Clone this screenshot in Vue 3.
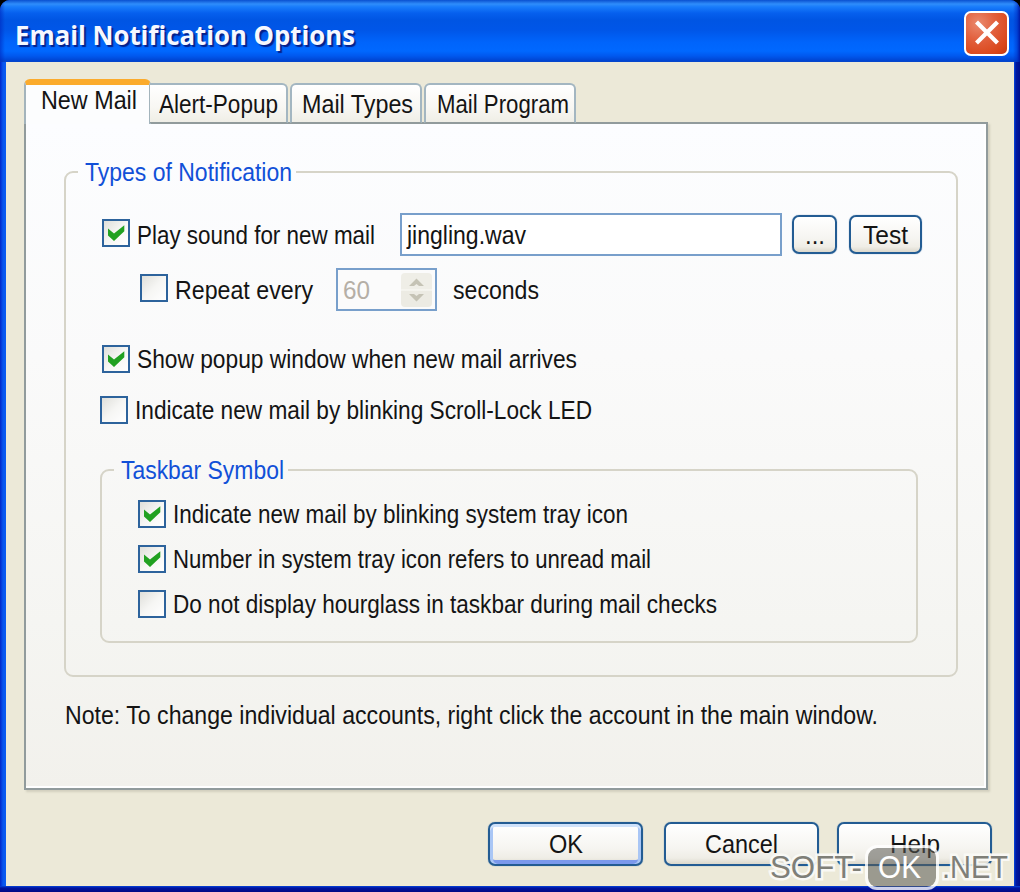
<script setup>
import { ref } from 'vue'

// Condenses a line of text horizontally so that it takes up the given width.
const vFit = {
  mounted(el, { value }) {
    const natural = el.getBoundingClientRect().width
    if (!natural) return
    el.style.transform = `scaleX(${value / natural})`
    el.style.marginRight = `${value - natural}px`
  },
}

const tick = 'M6 9.500L12 14.500L22.300 6.300V12.300L12 22L6 16.500Z'

const tabs = [
  { name: 'New Mail', fit: 96, cls: 'tab-new' },
  { name: 'Alert-Popup', fit: 119, cls: 'tab-alert' },
  { name: 'Mail Types', fit: 111, cls: 'tab-types' },
  { name: 'Mail Program', fit: 132, cls: 'tab-program' },
]
const active = ref('New Mail')

const taskbar = ref([
  { text: 'Indicate new mail by blinking system tray icon', fit: 455, on: true },
  { text: 'Number in system tray icon refers to unread mail', fit: 478, on: true },
  { text: 'Do not display hourglass in taskbar during mail checks', fit: 544, on: false },
])
</script>

<template>
  <div class="window">
    <header class="titlebar">
      <h1 v-fit="340" class="title">Email Notification Options</h1>
      <button class="close" aria-label="Close">
        <svg viewBox="0 0 44 44" width="44" height="44">
          <path d="M13 12.500L31 30.500M31 12.500L13 30.500" stroke="#fff" stroke-width="4.200" stroke-linecap="square" />
        </svg>
      </button>
    </header>

    <main class="body">
      <nav class="tabs">
        <div v-for="t in tabs" :key="t.name" class="tab" :class="[t.cls, { active: t.name === active }]" @click="active = t.name">
          <span v-fit="t.fit" class="t">{{ t.name }}</span>
        </div>
      </nav>

      <section class="panel">
        <fieldset class="group outer">
          <legend><span v-fit="207" class="t">Types of Notification</span></legend>
          <div class="row play">
            <span class="check"><svg viewBox="0 0 28 28"><path :d="tick" /></svg></span>
            <span v-fit="238" class="t">Play sound for new mail</span>
            <div class="input"><span v-fit="119" class="t">jingling.wav</span></div>
            <button class="btn browse"><span v-fit="20" class="t">...</span></button>
            <button class="btn test"><span v-fit="45" class="t">Test</span></button>
          </div>
          <div class="row repeat">
            <span class="check" />
            <span v-fit="138" class="t">Repeat every</span>
            <div class="spin">
              <span v-fit="27" class="t">60</span>
              <div class="arrows">
                <svg viewBox="0 0 31 34" width="31" height="34">
                  <path d="M8 13L15.500 5.500L23 13H18L15.500 11L13 13Z M8 21H13L15.500 23L18 21H23L15.500 28.500Z" fill="#c5c3b5" />
                </svg>
              </div>
            </div>
            <span v-fit="86" class="t">seconds</span>
          </div>
          <div class="row show">
            <span class="check"><svg viewBox="0 0 28 28"><path :d="tick" /></svg></span>
            <span v-fit="440" class="t">Show popup window when new mail arrives</span>
          </div>
          <div class="row led">
            <span class="check" />
            <span v-fit="457" class="t">Indicate new mail by blinking Scroll-Lock LED</span>
          </div>

          <fieldset class="group inner">
            <legend><span v-fit="163" class="t">Taskbar Symbol</span></legend>
            <div v-for="o in taskbar" :key="o.text" class="row tray" @click="o.on = !o.on">
              <span class="check"><svg v-if="o.on" viewBox="0 0 28 28"><path :d="tick" /></svg></span>
              <span v-fit="o.fit" class="t">{{ o.text }}</span>
            </div>
          </fieldset>
        </fieldset>
        <p class="note"><span v-fit="813" class="t">Note: To change individual accounts, right click the account in the main window.</span></p>
      </section>

      <footer class="actions">
        <button class="btn wide default"><span v-fit="34" class="t">OK</span></button>
        <button class="btn wide cancel"><span v-fit="73" class="t">Cancel</span></button>
        <button class="btn wide help"><span v-fit="50" class="t">Help</span></button>
      </footer>
    </main>

    <div class="watermark">
      <span v-fit="93" class="wm">SOFT-</span>
      <span class="wm-box"><span v-fit="43" class="wm-ok">OK</span></span>
      <span v-fit="67" class="wm">.NET</span>
    </div>
  </div>
</template>

<style scoped>
* { box-sizing: border-box; }
.window {
  position: relative;
  width: 1020px;
  height: 892px;
  padding: 0 6px 6px 6px;
  overflow: hidden;
  font-family: "Liberation Sans", Arial, sans-serif;
  font-size: 25px;
  color: #141414;
  border-radius: 10px 10px 0 0;
  background:
    linear-gradient(0deg, #000b84 0, #0013a0 4px, #0546dc 6px, transparent 6px),
    linear-gradient(90deg, #0126c8 0, #0855ee 3px, #0b5cf2 6px, transparent 6px),
    linear-gradient(270deg, #000f8a 0, #0019a4 4px, #0648dc 6px, transparent 7px) #0648dc;
}
.titlebar {
  display: flex;
  align-items: center;
  justify-content: space-between;
  height: 62px;
  margin: 0 -6px;
  padding: 4px 11px 0 15px;
  background:
    linear-gradient(270deg, #0019a4 0, rgba(0, 40, 190, 0.5) 3px, transparent 7px),
    linear-gradient(90deg, rgba(0, 40, 190, 0.6) 0, transparent 5px),
    linear-gradient(#0a50d0 0, #2f8dfb 4px, #187bfb 7px, #0660ee 13px, #0055e3 20px, #0056e8 30px, #0064fb 42px, #0068ff 51px, #0058ee 56px, #0043cf 61px, #0a48c8 62px);
}
.title {
  margin: 0;
  padding-top: 3px;
  font: bold 27px/34px "Open Sans", "Noto Sans", sans-serif;
  color: #f6f8ff;
  text-shadow: 2px 2px 1px #05208a;
  white-space: nowrap;
  transform-origin: 0 50%;
}
.close {
  width: 45px;
  height: 45px;
  padding: 0;
  border: 2px solid #fff;
  border-radius: 7px;
  background: radial-gradient(circle at 30% 25%, #ea8a6e 0, #e2603d 40%, #d9461a 80%, #c23a12 100%);
}
.close svg { display: block; margin: -1.5px; }
.t {
  display: inline-block;
  flex: none;
  line-height: 30px;
  white-space: nowrap;
  transform-origin: 0 50%;
}
.body {
  height: 824px;
  padding: 17px 25px 0 18px;
  background: #ece9d8;
  border-right: 1px solid #f4ead0;
  border-bottom: 1px solid #f4ead0;
}
.tabs {
  position: relative;
  z-index: 1;
  display: flex;
  align-items: flex-end;
  height: 44px;
}
.tab {
  height: 40px;
  padding-top: 4px;
  border: 2px solid #a3b6c1;
  border-bottom: 1px solid #919b9c;
  border-radius: 6px 6px 0 0;
  background: linear-gradient(#fff, #f8f7f3 60%, #efeee6);
}
.tab.active {
  height: 45px;
  margin-bottom: -1px;
  padding-top: 0;
  border-top: 6px solid #fbb02c;
  border-bottom: 0;
  border-color: #fbab2c #a3b4bc;
  background: #fcfdfe;
}
.tab-new { width: 127px; padding-left: 15px; }
.tab-alert { width: 138px; margin-left: -1px; padding-left: 9px; border-left: 0; border-top-left-radius: 0; }
.tab-types { width: 132px; margin-left: 2px; padding-left: 10px; }
.tab-program { width: 152px; margin-left: 2px; padding-left: 11px; }
.panel {
  height: 668px;
  margin-top: -1px;
  padding: 33px 28px 0 38px;
  border: 2px solid #919b9c;
  box-shadow: inset -2px -2px 0 #fff, 2px 2px 2px #d2cfbe;
  background: linear-gradient(#fcfdff, #fafafa 35%, #f5f5f2 75%, #f2f1ec);
}
.group {
  min-width: 0;
  margin: 0;
  border: 2px solid #d6d4c8;
  border-radius: 9px;
  padding: 0 0 0 12px;
}
.group legend {
  height: 30px;
  padding: 0 4px 0 7px;
  color: #1150d8;
}
.outer { width: 894px; height: 520px; }
.inner { width: 818px; height: 188px; margin: 31px 0 0 22px; }
.row { display: flex; align-items: center; height: 28px; }
.check {
  flex: none;
  width: 28px;
  height: 28px;
  margin-right: 7px;
  border: 2px solid #2d639c;
  background: linear-gradient(135deg, #dfdfda, #f6f6f4 50%, #fff);
}
.check svg { display: block; width: 28px; height: 28px; margin: -2px; }
.check path { fill: #21a121; }
.play { height: 43px; margin: 26px 0 0 24px; }
.play > .check, .repeat > .check { margin-bottom: 3px; }
.input {
  display: flex;
  align-items: center;
  width: 382px;
  height: 43px;
  margin-left: 25px;
  padding-left: 5px;
  border: 2px solid #789fcb;
  background: #fff;
}
.btn {
  display: flex;
  align-items: center;
  justify-content: center;
  flex: none;
  height: 39px;
  padding: 0;
  border: 2px solid #235c93;
  border-radius: 7px;
  font: inherit;
  color: inherit;
  background: linear-gradient(#fff, #f6f5f1 60%, #efede6 85%, #dcd8cc);
  box-shadow: 0 0 1px #4f7da8;
}
.browse { width: 45px; margin-left: 10px; }
.test { width: 73px; margin-left: 12px; }
.repeat { height: 43px; margin: 12px 0 0 62px; }
.spin {
  display: flex;
  align-items: center;
  justify-content: space-between;
  width: 101px;
  height: 43px;
  margin: 0 16px 0 23px;
  padding: 0 3px 0 5px;
  border: 2px solid #789fcb;
  background: #fbfbfb;
  color: #b5afa6;
}
.arrows { height: 34px; border-radius: 4px; background: linear-gradient(#efeee7 46%, #f8f8f3 50%, #ecebe3 54%); }
.arrows svg { display: block; }
.show { margin: 34px 0 0 24px; }
.led { margin: 23px 0 0 22px; }
.tray { margin: 17px 0 0 24px; }
legend + .tray { margin-top: 15px; }
.note { margin: 23px 0 0; padding-left: 1px; height: 30px; line-height: 30px; }
.actions { display: flex; height: 45px; margin-top: 32px; padding-left: 464px; }
.wide { height: 44px; width: 155px; }
.default { box-shadow: inset 0 3px 0 #cfe2fb, inset 3px 0 0 #a9c6f5, inset -3px 0 0 #a9c6f5, inset 0 -4px 0 #7b99ec, 0 0 1px #4f7da8; }
.cancel { margin-left: 21px; }
.help { margin-left: 18px; }
.watermark {
  position: absolute;
  left: 769px;
  top: 845px;
  display: flex;
  align-items: center;
  height: 45px;
  font-size: 31px;
}
.wm {
  display: inline-block;
  flex: none;
  padding-left: 1px;
  line-height: 40px;
  color: #7f7f78;
  -webkit-text-stroke: 5px rgba(250, 250, 246, 0.95);
  paint-order: stroke fill;
  white-space: nowrap;
  transform-origin: 0 50%;
}
.wm-box {
  display: flex;
  align-items: center;
  flex: none;
  width: 74px;
  height: 45px;
  margin: 0 2px 0 3px;
  padding-left: 10px;
  border: 3px solid rgba(255, 255, 255, 0.8);
  border-radius: 12px;
  background: rgba(90, 90, 84, 0.55);
  background-clip: padding-box;
}
.wm-ok { display: inline-block; color: #fff; transform-origin: 0 50%; }
</style>

<style>
html, body { margin: 0; background: #000; }
</style>
